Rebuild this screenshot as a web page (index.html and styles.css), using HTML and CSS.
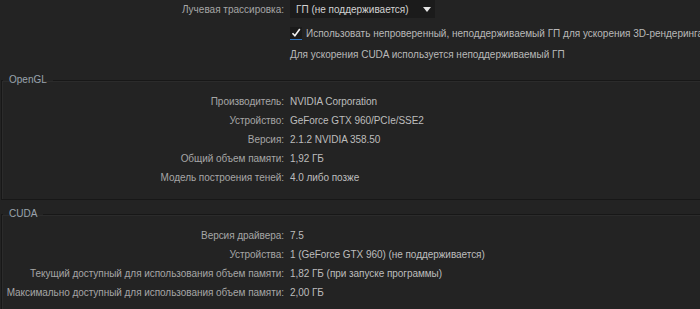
FILE: index.html
```html
<!DOCTYPE html>
<html lang="ru">
<head>
    <meta charset="UTF-8">
    <title>Установки</title>
    <link rel="stylesheet" href="styles.css">
</head>
<body>
    <div class="top">
        <div class="label">Лучевая трассировка:</div>
        <div class="select">
            <span>ГП (не поддерживается)</span>
            <svg class="arrow" width="8" height="5" viewBox="0 0 8 5"><path d="M0 0h8L4 5z" fill="#e6e6e6"/></svg>
        </div>

        <div></div>
        <label class="check">
            <span class="box">
                <svg width="12" height="12" viewBox="0 0 12 12"><path d="M2.5 6.2l2.4 2.6L9.8 2" fill="none" stroke="#f2f2f2" stroke-width="1.6"/></svg>
            </span>
            Использовать непроверенный, неподдерживаемый ГП для ускорения 3D-рендеринга
        </label>

        <div></div>
        <div class="note">Для ускорения CUDA используется неподдерживаемый ГП</div>
    </div>

    <fieldset class="group opengl">
        <legend>OpenGL</legend>
        <div class="rows">
            <div class="label">Производитель:</div>
            <div class="value">NVIDIA Corporation</div>
            <div class="label">Устройство:</div>
            <div class="value">GeForce GTX 960/PCIe/SSE2</div>
            <div class="label">Версия:</div>
            <div class="value">2.1.2 NVIDIA 358.50</div>
            <div class="label">Общий объем памяти:</div>
            <div class="value">1,92 ГБ</div>
            <div class="label">Модель построения теней:</div>
            <div class="value">4.0 либо позже</div>
        </div>
    </fieldset>

    <fieldset class="group cuda">
        <legend>CUDA</legend>
        <div class="rows">
            <div class="label">Версия драйвера:</div>
            <div class="value">7.5</div>
            <div class="label">Устройства:</div>
            <div class="value">1 (GeForce GTX 960) (не поддерживается)</div>
            <div class="label">Текущий доступный для использования объем памяти:</div>
            <div class="value">1,82 ГБ (при запуске программы)</div>
            <div class="label">Максимально доступный для использования объем памяти:</div>
            <div class="value">2,00 ГБ</div>
        </div>
    </fieldset>
</body>
</html>
```

FILE: styles.css
```css
html, body {
    margin: 0;
    background: #232323;
    overflow: hidden;
}
body {
    font-family: "Liberation Sans", Arial, sans-serif;
    font-size: 10px;
    color: #b9b9b9;
}

/* верхний блок */
.top {
    display: grid;
    grid-template-columns: 284px auto;
    column-gap: 6px;
    align-items: center;
}
.label {
    text-align: right;
    color: #a6a6a6;
    white-space: nowrap;
}
.select {
    width: 145px;
    height: 18px;
    background: #1b1b1b;
    display: flex;
    align-items: center;
    justify-content: space-between;
    padding: 0 6px;
    box-sizing: border-box;
    color: #d2d2d2;
    white-space: nowrap;
}
.arrow { margin-right: -2px; }
.check {
    display: flex;
    align-items: center;
    gap: 4px;
    margin-top: 6px;
    height: 18px;
    color: #b9b9b9;
    white-space: nowrap;
}
.box {
    width: 12px;
    height: 12px;
    background: #1a1a1a;
    border-bottom: 1px solid #2f74c0;
    display: flex;
}
.note {
    margin-top: 4px;
    height: 18px;
    line-height: 18px;
}

/* группы */
.group {
    margin: 10px -6px 0 1px;
    padding: 9px 0 14px;
    border: 1px solid #171717;
    border-right: none;
    box-shadow: inset 1px 1px 0 #2b2b2b;
}
.group legend {
    margin-left: 1px;
    padding: 0 6px;
    line-height: 12px;
    color: #9aa3ad;
}
.cuda { margin-top: 8px; }
.rows {
    display: grid;
    grid-template-columns: 282px auto;
    column-gap: 6px;
    row-gap: 5px;
    line-height: 14px;
    letter-spacing: -0.05px;
}
.value {
    color: #bdbdbd;
    white-space: nowrap;
}
```
